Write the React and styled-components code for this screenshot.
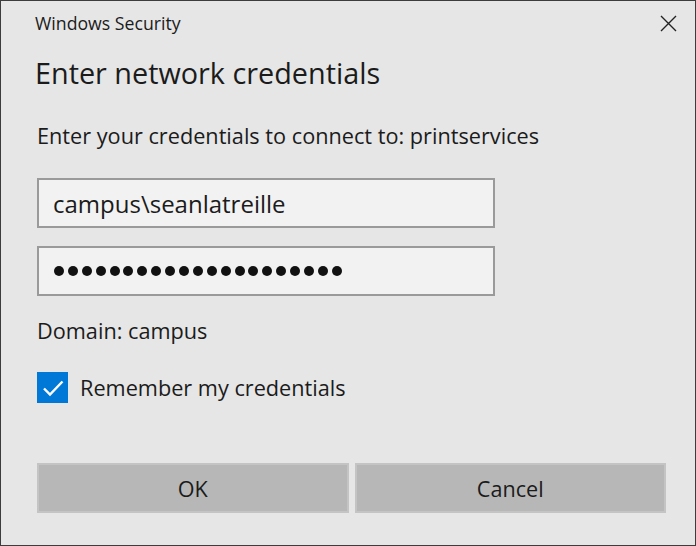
import React from "react";
import styled, { createGlobalStyle } from "styled-components";

const Global = createGlobalStyle`
  html, body { margin: 0; padding: 0; background: #e6e6e6; }
  * { box-sizing: border-box; }
`;

const Dialog = styled.div`
  width: 696px;
  height: 546px;
  background: #e6e6e6;
  border: 1px solid #3c3c3c;
  font-family: "Open Sans", "Noto Sans", sans-serif;
  color: #1b1b1b;
  display: flex;
  flex-direction: column;
`;

const TitleBar = styled.div`
  height: 44px;
  display: flex;
  align-items: center;
  justify-content: space-between;
  padding: 0 18px 0 34px;
`;

const TitleText = styled.span`
  font-size: 17.7px;
  color: #1b1b1b;
`;

const CloseButton = styled.button`
  border: none;
  background: transparent;
  padding: 0;
  width: 18px;
  height: 18px;
  display: flex;
  align-items: center;
  justify-content: center;
  color: #222;
`;

const Body = styled.div`
  flex: 1;
  display: flex;
  flex-direction: column;
  padding: 0 29px 0 36px;
`;

const Heading = styled.h1`
  margin: 6px 0 0 -2px;
  font-size: 28.8px;
  font-weight: 400;
  line-height: 44px;
`;

const Prompt = styled.p`
  margin: 26px 0 0;
  font-size: 21.7px;
  line-height: 30px;
`;

const Field = styled.div`
  width: 458px;
  height: 50px;
  flex: none;
  border: 2px solid #9a9a9a;
  background: #f2f2f2;
  padding: 0 14px;
  display: flex;
  align-items: center;
  font-size: 24px;
  color: #1b1b1b;
  margin-top: ${(p) => p.$top}px;
`;

const Dots = styled.div`
  display: flex;
  gap: 3.9px;
  padding-left: 1px;
`;

const Dot = styled.span`
  width: 10px;
  height: 10px;
  border-radius: 50%;
  background: #111;
`;

const Domain = styled.div`
  margin-top: 20px;
  font-size: 21.7px;
  line-height: 30px;
`;

const CheckRow = styled.label`
  margin-top: 26px;
  display: flex;
  align-items: center;
  gap: 12px;
  font-size: 21.7px;
`;

const CheckBox = styled.span`
  width: 31px;
  height: 31px;
  background: #0078d7;
  display: flex;
  align-items: center;
  justify-content: center;
`;

const Buttons = styled.div`
  margin-top: 60px;
  display: grid;
  grid-template-columns: 1fr 1fr;
  gap: 6px;
`;

const Button = styled.button`
  height: 50px;
  background: #b7b7b7;
  border: 2px solid #c4c4c4;
  font-family: "Open Sans", "Noto Sans", sans-serif;
  font-size: 21.6px;
  color: #1b1b1b;
  padding: 0;
`;

export default function App() {
  return (
    <>
      <Global />
      <Dialog>
        <TitleBar>
          <TitleText>Windows Security</TitleText>
          <CloseButton aria-label="Close">
            <svg width="17" height="17" viewBox="0 0 17 17">
              <path d="M1 1 L16 16 M16 1 L1 16" stroke="#222" strokeWidth="1.4" fill="none" />
            </svg>
          </CloseButton>
        </TitleBar>
        <Body>
          <Heading>Enter network credentials</Heading>
          <Prompt>Enter your credentials to connect to: printservices</Prompt>
          <Field $top={27}>campus\seanlatreille</Field>
          <Field $top={18} aria-label="Password">
            <Dots>
              {Array.from({ length: 21 }, (_, i) => (
                <Dot key={i} />
              ))}
            </Dots>
          </Field>
          <Domain>Domain: campus</Domain>
          <CheckRow>
            <CheckBox>
              <svg width="22" height="18" viewBox="0 0 22 18">
                <path d="M2 9.5 L8 15.5 L20.5 2.5" stroke="#fff" strokeWidth="2.4" fill="none" />
              </svg>
            </CheckBox>
            Remember my credentials
          </CheckRow>
          <Buttons>
            <Button>OK</Button>
            <Button>Cancel</Button>
          </Buttons>
        </Body>
      </Dialog>
    </>
  );
}
